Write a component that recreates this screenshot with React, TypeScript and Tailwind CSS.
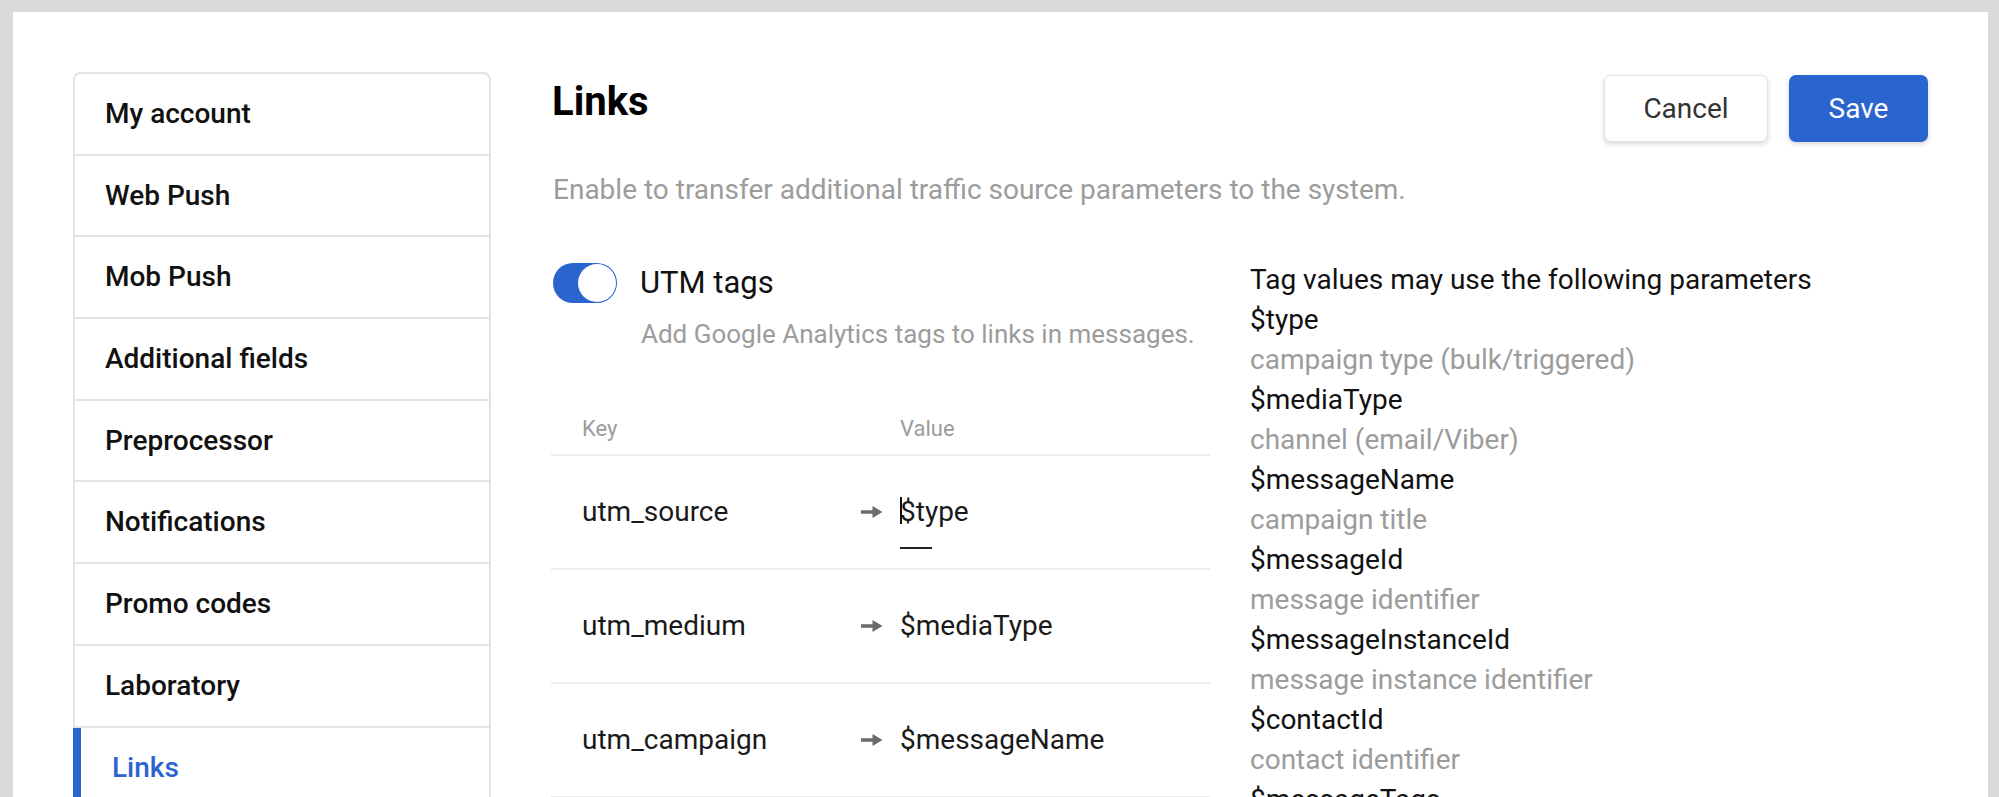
import React from "react";

const navItems = [
  "My account",
  "Web Push",
  "Mob Push",
  "Additional fields",
  "Preprocessor",
  "Notifications",
  "Promo codes",
  "Laboratory",
];

const rows = [
  { key: "utm_source", value: "$type", focused: true },
  { key: "utm_medium", value: "$mediaType" },
  { key: "utm_campaign", value: "$messageName" },
];

const params = [
  ["$type", "campaign type (bulk/triggered)"],
  ["$mediaType", "channel (email/Viber)"],
  ["$messageName", "campaign title"],
  ["$messageId", "message identifier"],
  ["$messageInstanceId", "message instance identifier"],
  ["$contactId", "contact identifier"],
];

function Arrow() {
  return (
    <svg width="22" height="14" viewBox="0 0 22 14" className="shrink-0">
      <path d="M0 5.3h11.5V1L21.5 7l-10 6V8.7H0z" fill="#6b6b6b" />
    </svg>
  );
}

export default function App() {
  return (
    <div
      className="h-screen overflow-hidden bg-[#d9d9d9] pt-[12px] pl-[13px] pr-[11px]"
      style={{ fontFamily: "Roboto, 'Liberation Sans', Arial, sans-serif" }}
    >
      <div className="h-full bg-white px-[60px] pt-[60px] flex gap-[60px]">
        {/* Sidebar */}
        <div className="w-[418px] shrink-0 self-start border-2 border-b-0 border-[#e3e3e3] rounded-t-[8px]">
          {navItems.map((item) => (
            <div
              key={item}
              className="h-[81.7px] border-b-2 border-[#e3e3e3] flex items-center pl-[30px] text-[28px] leading-[40px] font-medium text-[#111]"
            >
              {item}
            </div>
          ))}
          <div className="h-[80px] -ml-[2px] border-l-[8px] border-[#2a64cf] flex items-center pl-[31px] text-[28px] leading-[40px] font-medium text-[#2a64cf]">
            Links
          </div>
        </div>

        {/* Main */}
        <div className="flex-1 min-w-0">
          <div className="flex justify-between items-start pt-[3px]">
            <h1 className="mt-[3px] ml-[1px] text-[40px] leading-[48px] font-bold text-black">Links</h1>
            <div className="flex gap-[21px]">
              <button className="w-[164px] h-[67px] rounded-[7px] bg-white border border-[#e2e2e2] shadow-[0_2px_5px_rgba(0,0,0,0.16)] text-[28px] text-[#333]">
                Cancel
              </button>
              <button className="w-[139px] h-[67px] rounded-[7px] bg-[#2a64cf] shadow-[0_2px_5px_rgba(0,0,0,0.16)] text-[28px] text-white">
                Save
              </button>
            </div>
          </div>

          <p className="mt-[28px] ml-[2px] text-[28px] leading-[40px] text-[#9c9c9c]">
            Enable to transfer additional traffic source parameters to the system.
          </p>

          <div className="mt-[50px] flex gap-[40px]">
            {/* Left column */}
            <div className="w-[659px] shrink-0">
              <div className="mt-[3px] ml-[2px] flex items-center gap-[23px]">
                <div className="relative w-[64px] h-[40px] rounded-full bg-[#2a64cf]">
                  <div className="absolute right-[1px] top-[1px] w-[38px] h-[38px] rounded-full bg-white" />
                </div>
                <span className="text-[31px] leading-[40px] text-[#111]">UTM tags</span>
              </div>
              <p className="mt-[13px] ml-[90px] text-[26px] leading-[36px] text-[#9c9c9c]">
                Add Google Analytics tags to links in messages.
              </p>

              <div className="mt-[62px] flex pl-[31px] pb-[10px] border-b-2 border-[#ececec] text-[22px] leading-[30px] text-[#9c9c9c]">
                <div className="w-[318px]">Key</div>
                <div>Value</div>
              </div>

              {rows.map((r) => (
                <div
                  key={r.key}
                  className="h-[114px] border-b-2 border-[#ececec] flex items-center pl-[31px] text-[28px] leading-[40px] text-[#1a1a1a]"
                >
                  <div className="w-[279px]">{r.key}</div>
                  <Arrow />
                  <div className="ml-[17px] relative">
                    {r.focused && (
                      <>
                        <span className="absolute left-0 top-[5px] w-[2px] h-[27px] bg-[#111]" />
                        <span className="absolute left-0 top-[55px] w-[32px] h-[2px] bg-[#222]" />
                      </>
                    )}
                    {r.value}
                  </div>
                </div>
              ))}
            </div>

            {/* Right column */}
            <div className="flex-1 text-[28px] leading-[40px]">
              <div className="text-[#111]">Tag values may use the following parameters</div>
              {params.map(([name, desc]) => (
                <React.Fragment key={name}>
                  <div className="text-[#111]">{name}</div>
                  <div className="text-[#9c9c9c]">{desc}</div>
                </React.Fragment>
              ))}
              <div className="text-[#111]">$messageTags</div>
            </div>
          </div>
        </div>
      </div>
    </div>
  );
}
